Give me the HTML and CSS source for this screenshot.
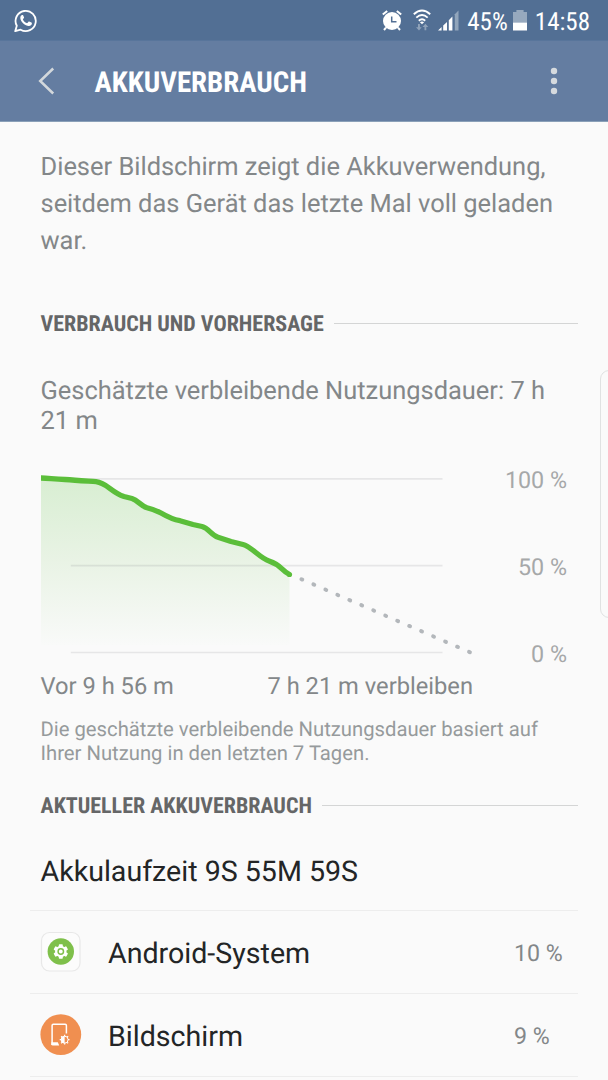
FILE: index.html
```html
<!DOCTYPE html>
<html lang="de">
<head>
<meta charset="utf-8">
<title>Akkuverbrauch</title>
<link rel="stylesheet" href="styles.css">
</head>
<body>
<div class="screen">
  <header class="status-bar">
    <svg class="status-app" width="24" height="24" viewBox="0 0 24 24" fill="none">
      <path d="M1.2 22.2 2.8 16.8A10.1 10.1 0 1 1 6.6 20.7Z" stroke="#fff" stroke-width="1.8" stroke-linejoin="round"/>
      <path d="M8.2 6.1C7.6 6.1 6.2 7.1 6.3 9c.3 4 5.2 8.2 8.7 8 1.4-.1 2.9-1 2.9-2.7 0-.4-.2-.5-.5-.7l-2.2-1c-.4-.2-.7 0-.9.3l-.9 1.1c-.2.2-.5.2-.8.1-1.6-.7-2.9-1.9-3.600-3.300-.1-.3-.1-.5.1-.7l.8-1c.2-.3.2-.5.1-.8l-.9-2c-.1-.2-.4-.2-.9-.2Z" fill="#fff"/>
    </svg>
    <div class="status-icons">
      <svg class="icon-alarm" width="20" height="22" viewBox="0 0 20 22" fill="none">
        <circle cx="10" cy="12" r="9" fill="#fff"/>
        <path d="M.8 5.600 5.200 1.900M19.200 5.600 14.800 1.900M4 18.600 2 21M16 18.600l2 2.400" stroke="#fff" stroke-width="2"/>
        <path d="M9.700 7.500v5.300h4.800" stroke="#526f94" stroke-width="1.500"/>
      </svg>
      <svg class="icon-wifi" width="18" height="22" viewBox="0 0 18 22" fill="none">
        <path d="M.8 5.200Q9-2.100 17.200 5.200M3.300 8.600Q9 3.600 14.700 8.600M5.800 11.700Q9 9 12.200 11.700" stroke="#fff" stroke-width="1.900"/>
        <path d="M9 15.200 6.900 13.200Q9 11.900 11.100 13.200Z" fill="#fff"/>
        <path d="M5 15v3.200H3l3 3.200 2.700-3.200H6.900V15ZM11.500 21.200V18H9.500l2.900-3.200 2.900 3.200h-2v3.200Z" fill="#8fa2b9"/>
      </svg>
      <svg class="icon-signal" width="21" height="21" viewBox="0 0 21 21">
        <path d="M0 20.500 3.600 17v3.500ZM5.200 15.600 9 12v8.500H5.200ZM10.800 10.200l3.600-3.600v13.900h-3.600Z" fill="#fff"/>
        <path d="M16.800 4.200 20.500.5v20h-3.700Z" fill="#91a5bb"/>
      </svg>
      <span class="condensed status-percent">45%</span>
      <svg class="icon-battery" width="14" height="21" viewBox="0 0 14 21">
        <path d="M0 2h3.400V0h7.200v2H14v10.500H0Z" fill="#97a9be"/>
        <path d="M0 12.500h14V20.500H0Z" fill="#fff"/>
      </svg>
      <span class="condensed status-clock">14:58</span>
    </div>
  </header>
  <nav class="app-bar">
    <svg class="back" width="17" height="28" viewBox="0 0 17 28" fill="none"><path d="M15.200 1.500 2.200 14l13 12.500" stroke="#d3d8dc" stroke-width="2.500"/></svg>
    <h1 class="condensed title">AKKUVERBRAUCH</h1>
    <svg class="more" width="8" height="28" viewBox="0 0 8 28" fill="#d6dade"><circle cx="4" cy="4" r="3.200"/><circle cx="4" cy="14" r="3.200"/><circle cx="4" cy="24" r="3.200"/></svg>
  </nav>
  <main class="content">
    <p class="intro">Dieser Bildschirm zeigt die Akkuverwendung,<br>seitdem das Gerät das letzte Mal voll geladen<br>war.</p>
    <h2 class="section section-forecast"><span class="section-label">VERBRAUCH UND VORHERSAGE</span></h2>
    <p class="estimate">Geschätzte verbleibende Nutzungsdauer: 7 h<br>21 m</p>
    <div class="chart">
      <svg class="plot" width="440" height="190" viewBox="0 0 440 190" fill="none">
        <defs><linearGradient id="fade" x1="0" y1="0" x2="0" y2="1"><stop offset="0" stop-color="#d8eed2"/><stop offset=".5" stop-color="#e9f3e5"/><stop offset="1" stop-color="#f9faf9"/></linearGradient></defs>
        <path d="M0 8C8 8 12 9 24 9.500 35 10 50 11 55 11.700 65 13 70 22 83 26L91 28C97 30 100 35 106 37L116 40 132 48 160 56.500C166 58 170 65 176 67.500L204 76C212 80 220 90 229 94 240 98 240 101 248.500 104.500V175H0Z" fill="url(#fade)"/>
        <path d="M0 8.800H401.500M29.800 95.700H401.500M29.800 182.500H401.500" stroke="#68686f" stroke-opacity=".13" stroke-width="1.700"/>
        <path d="M0 8C8 8 12 9.200 24 9.500 36 10.500 48 11.200 55 11.700 66 13 70 22 83 26.500L91 28.500C97 30.500 100 36 106 37.800 112 39.300 115 40.300 120 43 126 46.500 131 49.300 139 50.700L152 54.500 161 56.500C168 58.500 170 65 177 67.300L190 71.500 202 74.500C210 76.500 219 88 228 91 241 95.500 240 100 248.500 104.500" stroke="#5bbe3a" stroke-width="5.300" stroke-linejoin="round"/>
        <circle cx="248.500" cy="104.500" r="2.600" fill="#5bbe3a"/>
        <path d="M260.400 109.200 430 182.700" stroke="#b3b7bb" stroke-width="3.900" stroke-linecap="round" stroke-dasharray="1 12.050"/>
      </svg>
      <div class="scale"><span>100 %</span><span>50 %</span><span>0 %</span></div>
    </div>
    <div class="times"><span>Vor 9 h 56 m</span><span>7 h 21 m verbleiben</span></div>
    <p class="note">Die geschätzte verbleibende Nutzungsdauer basiert auf<br>Ihrer Nutzung in den letzten 7 Tagen.</p>
    <h2 class="section section-usage"><span class="section-label">AKTUELLER AKKUVERBRAUCH</span></h2>
    <p class="runtime">Akkulaufzeit 9S 55M 59S</p>
    <ul class="apps">
      <li class="app">
        <svg class="app-icon" width="42" height="42" viewBox="0 0 42 42" fill="none">
          <rect x="1.500" y="1.500" width="38.500" height="38.500" rx="8" fill="#fcfcfc" stroke="#e8e8e8" stroke-width="1.200"/>
          <circle cx="20.800" cy="20.500" r="13.200" fill="#7fc04b"/>
          <g fill="#fff"><circle cx="20.800" cy="20.500" r="5.700"/><rect x="18.800" y="13.200" width="4" height="14.600" rx=".8"/><rect x="18.800" y="13.200" width="4" height="14.600" rx=".8" transform="rotate(60 20.800 20.500)"/><rect x="18.800" y="13.200" width="4" height="14.600" rx=".8" transform="rotate(120 20.800 20.500)"/></g>
          <circle cx="20.800" cy="20.500" r="2.700" stroke="#7fc04b" stroke-width="1.500"/>
        </svg>
        <span class="app-name">Android-System</span><span class="app-share">10 %</span>
      </li>
      <li class="app">
        <svg class="app-icon" width="42" height="42" viewBox="0 0 42 42" fill="none">
          <circle cx="20.800" cy="20.600" r="20.400" fill="#f08f50"/>
          <path d="M12.100 31V11.500Q12.100 10.300 13.300 10.300H25.200Q26.400 10.300 26.400 11.500V19.500" stroke="#fff" stroke-width="1.500"/>
          <path d="M11.400 28.200H17.800L19.200 31.500H12.800Q11.400 31.500 11.400 30.200Z" fill="#fff"/>
          <path d="M24.600 20.800v9.800M19.700 25.700h9.800M21.100 22.200l7 7M28.100 22.200l-7 7" stroke="#fff" stroke-width="1.300"/>
          <circle cx="24.600" cy="25.700" r="3.500" fill="#f08f50" stroke="#fff"/>
          <path d="M24.600 22.200a3.500 3.500 0 0 0 0 7Z" fill="#fff"/>
        </svg>
        <span class="app-name">Bildschirm</span><span class="app-share">9 %</span>
      </li>
    </ul>
  </main>
  <div class="edge-handle"></div>
</div>
</body>
</html>
```
FILE: styles.css
```css
* { box-sizing: border-box; }
body, h1, h2, p, ul { margin: 0; padding: 0; }
body { background: #fafafa; font-family: Roboto, sans-serif; color: #838789; text-rendering: geometricPrecision; }
svg { display: block; flex: none; }
.screen { position: relative; width: 608px; height: 1080px; overflow: hidden; background: #fafafa; }
.status-bar { display: flex; justify-content: space-between; align-items: flex-start; height: 41px; padding: 9px 18px 0 14px; background: #526f94; border-bottom: 1px solid #58759b; color: #fff; }
.status-icons { display: flex; align-items: flex-start; white-space: nowrap; }
.icon-wifi { margin-left: 11px; }
.icon-signal { margin: 1px 0 0 7px; }
.icon-battery { margin-top: 1px; }
.condensed, .section-label { font-family: "Roboto Condensed", Roboto, sans-serif; font-stretch: 75%; }
.status-percent { margin: 0 5px 0 8px; font-size: 25px; line-height: 28px; }
.status-clock { margin-left: 8px; font-size: 25px; line-height: 28px; }
.app-bar { display: flex; align-items: center; height: 81px; padding: 0 50px 0 38px; background: #647da1; border-bottom: 1px solid #8aa0b8; }
.title { margin: 3px 0 0 39.500px; font-size: 28.900px; font-weight: 700; color: #fff; }
.more { margin-left: auto; }
.content { padding: 27px 30px 0 40.500px; }
.intro { font-size: 25.450px; line-height: 37px; white-space: nowrap; }
.section { display: flex; align-items: center; gap: 10px; height: 30px; color: #656667; }
.section::after { content: ""; flex: 1; height: 1px; margin-top: -2px; background: #d4d5d5; }
.section-label { font-size: 22px; font-weight: 700; }
.section-forecast { margin-top: 49px; }
.estimate { margin-top: 37px; font-size: 25.450px; line-height: 30px; white-space: nowrap; }
.chart { display: flex; justify-content: space-between; height: 190px; margin-top: 34px; padding-right: 11px; }
.scale { display: flex; flex-direction: column; justify-content: space-between; height: 204px; margin-top: -5px; font-size: 23.300px; line-height: 30px; text-align: right; color: #a6a8a9; white-space: nowrap; }
.times { display: flex; justify-content: space-between; margin-top: 11px; padding-right: 105px; font-size: 23.700px; line-height: 30px; }
.note { margin-top: 16px; font-size: 20.250px; line-height: 24px; color: #969a9c; white-space: nowrap; }
.section-usage { margin-top: 26px; }
.runtime { margin-top: 33px; font-size: 28.600px; line-height: 34px; color: #232526; }
.apps { margin: 22px 0 0 -10.500px; list-style: none; }
.app { display: flex; align-items: center; height: 83px; padding-left: 10px; border-top: 1px solid #ededed; }
.app:last-child { height: 84px; border-bottom: 1px solid #ededed; }
.app-name { margin: 1px 0 0 26px; font-size: 28.600px; color: #232526; }
.app-share { width: 64px; margin: 1px 0 0 auto; font-size: 23.200px; }
.edge-handle { position: absolute; top: 370px; right: -10px; width: 18px; height: 248px; border: 1px solid #e0e2e2; border-radius: 9px; }
```
